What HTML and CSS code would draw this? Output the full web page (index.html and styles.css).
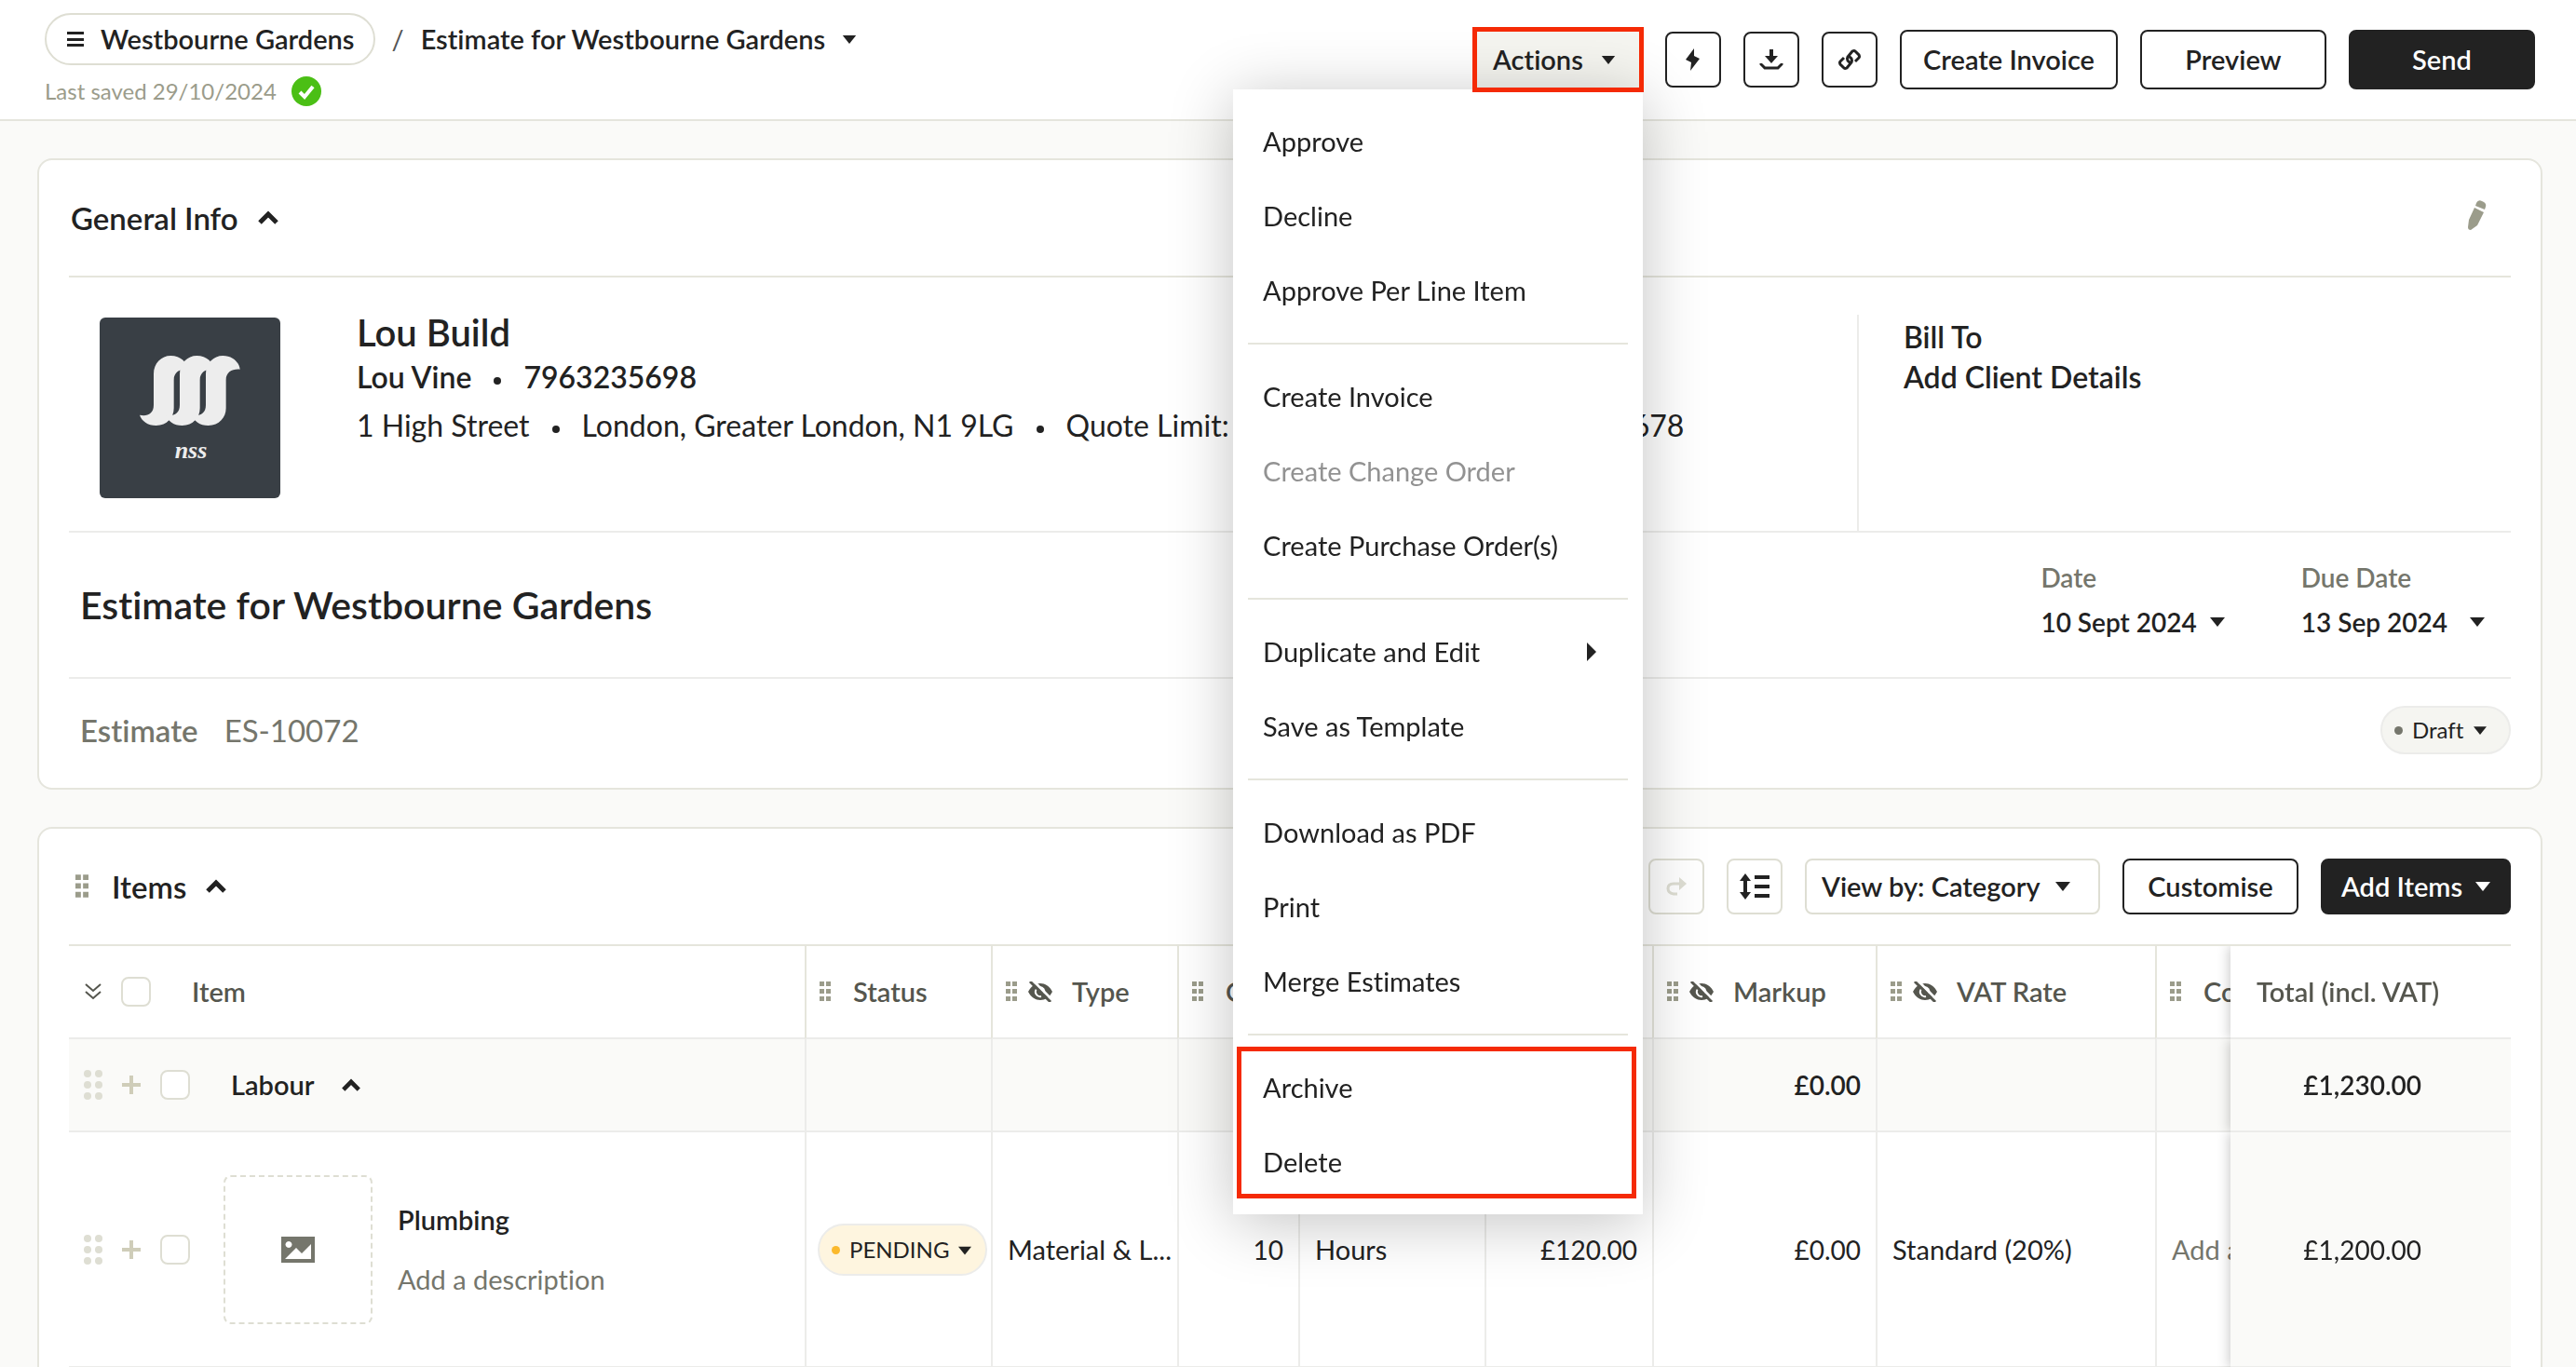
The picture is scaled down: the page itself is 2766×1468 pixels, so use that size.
FILE: index.html
```
<!DOCTYPE html>
<html lang="en">
<head>
    <meta charset="UTF-8">
    <meta name="viewport" content="width=device-width, initial-scale=1.0">
    <title>Estimate for Westbourne Gardens</title>
    <link rel="stylesheet" href="styles.css">
</head>
<body>
    <!-- Shared icons -->
    <svg class="sprite" aria-hidden="true">
        <symbol id="caret" viewBox="0 0 16 10"><path d="M0 0h16L8 10z"/></symbol>
        <symbol id="chevron-up" viewBox="0 0 24 16"><path d="M3 13l9-9 9 9" fill="none" stroke="currentColor" stroke-width="5"/></symbol>
        <symbol id="drag" viewBox="0 0 12 22"><path d="M0 0h5v5H0zM7 0h5v5H7zM0 8h5v5H0zM7 8h5v5H7zM0 16h5v5H0zM7 16h5v5H7z"/></symbol>
        <symbol id="dots" viewBox="0 0 20 32"><circle cx="4" cy="4" r="4"/><circle cx="16" cy="4" r="4"/><circle cx="4" cy="16" r="4"/><circle cx="16" cy="16" r="4"/><circle cx="4" cy="28" r="4"/><circle cx="16" cy="28" r="4"/></symbol>
        <symbol id="plus" viewBox="0 0 20 20"><path d="M8 0h4v8h8v4h-8v8H8v-8H0V8h8z"/></symbol>
        <symbol id="eye-off" viewBox="0 0 26 22">
            <path d="M0 11C3 5 8 2 13 2s10 3 13 9c-3 6-8 9-13 9S3 17 0 11z"/>
            <path d="M9 8a5 5 0 0 0 5 8M12 6a5 5 0 0 1 5 7" fill="none" stroke="#fff" stroke-width="2"/>
            <path d="M5 -1L26 20" stroke="#fff" stroke-width="3"/>
            <path d="M2 0L24 22" stroke="currentColor" stroke-width="3"/>
        </symbol>
    </svg>

    <header class="topbar">
        <div class="topbar-left">
            <nav class="breadcrumb">
                <a class="crumb-pill" href="#">
                    <svg width="18" height="16" viewBox="0 0 18 16"><path d="M0 0h18v3H0zM0 7h18v3H0zM0 13h18v3H0z"/></svg>
                    Westbourne Gardens
                </a>
                <span class="slash">/</span>
                <button class="crumb-title" type="button">Estimate for Westbourne Gardens <svg width="16" height="9"><use href="#caret"/></svg></button>
            </nav>
            <p class="saved">
                Last saved 29/10/2024
                <svg width="32" height="32" viewBox="0 0 32 32"><circle cx="16" cy="16" r="16" fill="#4bbf15"/><path class="outline" d="M9 17l5 5 9-11" stroke="#fff" stroke-width="4"/></svg>
            </p>
        </div>
        <div class="topbar-right">
            <div class="actions">
                <button class="actions-toggle" type="button" aria-expanded="true">Actions <svg width="16" height="9"><use href="#caret"/></svg></button>
                <div class="menu" role="menu">
                    <div class="menu-group">
                        <button class="menu-item" type="button" role="menuitem">Approve</button>
                        <button class="menu-item" type="button" role="menuitem">Decline</button>
                        <button class="menu-item" type="button" role="menuitem">Approve Per Line Item</button>
                    </div>
                    <div class="menu-group">
                        <button class="menu-item" type="button" role="menuitem">Create Invoice</button>
                        <button class="menu-item" type="button" role="menuitem" disabled>Create Change Order</button>
                        <button class="menu-item" type="button" role="menuitem">Create Purchase Order(s)</button>
                    </div>
                    <div class="menu-group">
                        <button class="menu-item" type="button" role="menuitem">Duplicate and Edit <svg width="10" height="20" viewBox="0 0 10 20"><path d="M0 0l10 10L0 20z"/></svg></button>
                        <button class="menu-item" type="button" role="menuitem">Save as Template</button>
                    </div>
                    <div class="menu-group">
                        <button class="menu-item" type="button" role="menuitem">Download as PDF</button>
                        <button class="menu-item" type="button" role="menuitem">Print</button>
                        <button class="menu-item" type="button" role="menuitem">Merge Estimates</button>
                    </div>
                    <div class="menu-group highlighted">
                        <button class="menu-item" type="button" role="menuitem">Archive</button>
                        <button class="menu-item" type="button" role="menuitem">Delete</button>
                    </div>
                </div>
            </div>
            <button class="btn btn-icon" type="button" aria-label="Automations">
                <svg width="16" height="24" viewBox="0 0 16 24"><path d="M9 0L0 12l6 3-1 9 10-13-6-3z"/></svg>
            </button>
            <button class="btn btn-icon" type="button" aria-label="Download">
                <svg width="24" height="24" viewBox="0 0 24 24"><path d="M10 1h4v7h5l-7 8-7-8h5z"/><path class="outline" d="M1 16v1l4 4h14l4-4v-1" stroke="currentColor" stroke-width="3"/></svg>
            </button>
            <button class="btn btn-icon" type="button" aria-label="Copy link">
                <svg class="outline" width="24" height="24" viewBox="0 0 24 24" stroke="currentColor" stroke-width="3"><path d="M13 16l-3-3q-1-2 0-4l5-6q2-1 3 0l4 4q1 2 0 3l-4 4"/><path d="M11 8l3 3q1 2 0 4l-5 6q-2 1-3 0l-4-4q-1-2 0-3l4-4"/></svg>
            </button>
            <button class="btn btn-wide" type="button">Create Invoice</button>
            <button class="btn btn-wide" type="button">Preview</button>
            <button class="btn btn-wide btn-dark" type="button">Send</button>
        </div>
    </header>

    <main class="page">
        <section class="card">
            <div class="card-header info-header">
                <h2>General Info</h2>
                <svg width="24" height="16"><use href="#chevron-up"/></svg>
                <button class="edit" type="button" aria-label="Edit general info">
                    <svg width="22" height="32" viewBox="0 0 22 32"><path d="M11 3q2-4 6-2l2 1q3 2 2 5l-1 3-10-4zM9 8l10 5-7 14-7 5q-3 0-3-3l1-8z"/></svg>
                </button>
            </div>
            <div class="company">
                <svg class="logo" viewBox="0 0 194 194" role="img" aria-label="nss logo">
                    <rect width="194" height="194" rx="6" fill="#393f45"/>
                    <g fill="#ededed">
                        <g transform="translate(23 19) scale(.3333)">
                            <path id="ribbon" d="M60 257C82 262 105 255 105 225V125C105 90 130 66 160 66C192 66 213 88 215 110C190 108 170 118 170 145V235C170 265 148 291 113 291C86 291 66 276 60 257z"/>
                            <use href="#ribbon" x="84"/>
                            <use href="#ribbon" x="168"/>
                        </g>
                        <text class="logo-text" x="98" y="151" text-anchor="middle">nss</text>
                    </g>
                </svg>
                <div class="company-info">
                    <h3>Lou Build</h3>
                    <p class="contact"><span>Lou Vine</span><span>7963235698</span></p>
                    <p class="address"><span>1 High Street</span><span>London, Greater London, N1 9LG</span><span>Quote Limit: £5,000.00</span><span>VAT No.: 12345678</span></p>
                </div>
                <div class="bill-to">
                    <p>Bill To</p>
                    <p><a href="#">Add Client Details</a></p>
                </div>
            </div>
            <div class="title-row">
                <h1>Estimate for Westbourne Gardens</h1>
                <div class="date">
                    <span id="date-label">Date</span>
                    <button type="button" aria-labelledby="date-label">10 Sept 2024 <svg width="16" height="10"><use href="#caret"/></svg></button>
                </div>
                <div class="date">
                    <span id="due-label">Due Date</span>
                    <button class="due" type="button" aria-labelledby="due-label">13 Sep 2024 <svg width="16" height="10"><use href="#caret"/></svg></button>
                </div>
            </div>
            <div class="number-row">
                <strong>Estimate</strong>
                <span>ES-10072</span>
                <div class="pill pill-draft">
                    <select aria-label="Estimate status"><option>Draft</option></select>
                    <svg width="14" height="9"><use href="#caret"/></svg>
                </div>
            </div>
        </section>

        <section class="card">
            <div class="card-header items-header">
                <svg class="drag" width="14" height="26"><use href="#drag"/></svg>
                <h2>Items</h2>
                <svg width="24" height="16"><use href="#chevron-up"/></svg>
                <div class="toolbar">
                    <button class="btn btn-icon btn-light" type="button" aria-label="Undo" disabled>
                        <svg width="22" height="20" viewBox="0 0 22 20"><path d="M0 7l8-7v14z"/><path class="outline" d="M7 7h7q6 0 6 5t-6 6h-4" stroke="currentColor" stroke-width="3"/></svg>
                    </button>
                    <button class="btn btn-icon btn-light" type="button" aria-label="Redo" disabled>
                        <svg width="22" height="20" viewBox="0 0 22 20"><path d="M22 7l-8-7v14z"/><path class="outline" d="M15 7H8q-6 0-6 5t6 6h4" stroke="currentColor" stroke-width="3"/></svg>
                    </button>
                    <button class="btn btn-icon btn-light" type="button" aria-label="Row height">
                        <svg width="32" height="28" viewBox="0 0 32 28"><path d="M6 0l6 8H8v12h4l-6 8-6-8h4V8H0zM16 2h16v4H16zM16 12h16v4H16zM16 22h16v4H16z"/></svg>
                    </button>
                    <div class="view-by">
                        <select aria-label="View by"><option>View by: Category</option></select>
                        <svg width="16" height="10"><use href="#caret"/></svg>
                    </div>
                    <button class="btn btn-customise" type="button">Customise</button>
                    <button class="btn btn-dark btn-add" type="button">Add Items <svg width="16" height="10"><use href="#caret"/></svg></button>
                </div>
            </div>
            <div class="table-wrap">
                <table>
                    <colgroup>
                        <col class="col-item"><col class="col-status"><col class="col-type"><col class="col-qty"><col class="col-unit">
                        <col class="col-cost"><col class="col-markup"><col class="col-vat"><col class="col-comment"><col class="col-total">
                    </colgroup>
                    <thead>
                        <tr>
                            <th>
                                <div class="cell cell-item">
                                    <svg class="outline" width="18" height="18" viewBox="0 0 18 18" stroke="currentColor" stroke-width="2"><path d="M1 1l8 7 8-7M1 9l8 7 8-7"/></svg>
                                    <input type="checkbox" aria-label="Select all items">
                                    <span class="name">Item</span>
                                </div>
                            </th>
                            <th><div class="cell"><svg class="drag" width="12" height="22"><use href="#drag"/></svg><span class="label">Status</span></div></th>
                            <th><div class="cell"><svg class="drag" width="12" height="22"><use href="#drag"/></svg><svg class="eye" width="26" height="22"><use href="#eye-off"/></svg><span class="label">Type</span></div></th>
                            <th><div class="cell"><svg class="drag" width="12" height="22"><use href="#drag"/></svg><span class="label">Qty</span></div></th>
                            <th><div class="cell"><svg class="drag" width="12" height="22"><use href="#drag"/></svg><span class="label">Unit</span></div></th>
                            <th><div class="cell"><svg class="drag" width="12" height="22"><use href="#drag"/></svg><span class="label">Cost</span></div></th>
                            <th><div class="cell"><svg class="drag" width="12" height="22"><use href="#drag"/></svg><svg class="eye" width="26" height="22"><use href="#eye-off"/></svg><span class="label">Markup</span></div></th>
                            <th><div class="cell"><svg class="drag" width="12" height="22"><use href="#drag"/></svg><svg class="eye" width="26" height="22"><use href="#eye-off"/></svg><span class="label">VAT Rate</span></div></th>
                            <th><div class="cell"><svg class="drag" width="12" height="22"><use href="#drag"/></svg><span class="label">Comments</span></div></th>
                            <th class="total">Total (incl. VAT)</th>
                        </tr>
                    </thead>
                    <tbody>
                        <tr class="group">
                            <td>
                                <div class="cell cell-item">
                                    <svg class="faint" width="20" height="32"><use href="#dots"/></svg>
                                    <svg class="faint-plus" width="20" height="20"><use href="#plus"/></svg>
                                    <input type="checkbox" aria-label="Select Labour">
                                    <span class="name">Labour</span>
                                    <svg class="group-chevron" width="22" height="15"><use href="#chevron-up"/></svg>
                                </div>
                            </td>
                            <td></td>
                            <td></td>
                            <td></td>
                            <td></td>
                            <td></td>
                            <td class="num">£0.00</td>
                            <td></td>
                            <td></td>
                            <td class="num total">£1,230.00</td>
                        </tr>
                        <tr class="line">
                            <td>
                                <div class="cell cell-item">
                                    <svg class="faint" width="20" height="32"><use href="#dots"/></svg>
                                    <svg class="faint-plus" width="20" height="20"><use href="#plus"/></svg>
                                    <input type="checkbox" aria-label="Select Plumbing">
                                    <button class="image-drop" type="button" aria-label="Add image">
                                        <svg width="36" height="28" viewBox="0 0 36 28"><path fill-rule="evenodd" d="M0 0h36v28H0zM4 24h28V8l-10 10-6-6zM8 5a3.500 3.500 0 1 0 .01 0z"/></svg>
                                    </button>
                                    <div class="line-text">
                                        <strong>Plumbing</strong>
                                        <span>Add a description</span>
                                    </div>
                                </div>
                            </td>
                            <td class="status-cell">
                                <div class="pill pill-pending">
                                    <select aria-label="Item status"><option>PENDING</option></select>
                                    <svg width="14" height="10"><use href="#caret"/></svg>
                                </div>
                            </td>
                            <td>Material &amp; L...</td>
                            <td class="num">10</td>
                            <td>Hours</td>
                            <td class="num">£120.00</td>
                            <td class="num">£0.00</td>
                            <td>Standard (20%)</td>
                            <td class="placeholder">Add a comment</td>
                            <td class="num total">£1,200.00</td>
                        </tr>
                    </tbody>
                </table>
            </div>
        </section>
    </main>
</body>
</html>
```
FILE: styles.css
```
* {
    box-sizing: border-box;
}
body {
    margin: 0;
    height: 100vh;
    display: flex;
    flex-direction: column;
    overflow: hidden;
    background-color: #fafaf8;
    color: #222;
    font-family: Lato, "Noto Sans", sans-serif;
    font-size: 29px;
    line-height: 36px;
    font-variant-ligatures: none;
}
h1, h2, h3, p {
    margin: 0;
    font-weight: 600;
}
button, select, input {
    margin: 0;
    font: inherit;
    font-variant-ligatures: none;
    color: inherit;
}
button {
    padding: 0;
    border: none;
    background: none;
    text-align: left;
}
select {
    appearance: none;
    border: none;
    background: none;
}
a {
    color: inherit;
    text-decoration: none;
}
svg {
    flex: none;
    fill: currentColor;
    overflow: visible;
}
.outline {
    fill: none;
}
.sprite {
    position: absolute;
    width: 0;
    height: 0;
    overflow: hidden;
}

/* Top bar */
.topbar {
    position: relative;
    z-index: 2;
    display: flex;
    justify-content: space-between;
    flex: none;
    height: 130px;
    padding: 0 44px 0 48px;
    background-color: #fff;
    border-bottom: 2px solid #e5e5dd;
}
.topbar-left {
    padding-top: 14px;
}
.breadcrumb {
    display: flex;
    align-items: center;
}
.crumb-pill {
    display: flex;
    align-items: center;
    gap: 18px;
    height: 56px;
    padding: 0 20px 0 22px;
    border: 2px solid #deded3;
    border-radius: 28px;
    font-weight: 600;
}
.slash {
    margin: 0 18px;
    color: #555;
}
.crumb-title {
    display: flex;
    align-items: center;
    gap: 18px;
    font-weight: 600;
}
.saved {
    display: flex;
    align-items: center;
    gap: 16px;
    margin-top: 10px;
    font-size: 24px;
    font-weight: 400;
    color: #9b9c8b;
}
.topbar-right {
    display: flex;
    align-items: center;
    gap: 24px;
}
.btn {
    display: flex;
    align-items: center;
    justify-content: center;
    gap: 14px;
    height: 60px;
    border: 2px solid #222;
    border-radius: 8px;
    background-color: #fff;
    font-weight: 600;
}
.btn-icon {
    width: 60px;
}
.btn-wide {
    height: 64px;
    min-width: 200px;
    padding: 0 23px;
}
.btn-dark {
    background-color: #222;
    color: #fff;
}
.btn-light {
    border-color: #deded3;
}
.btn-light:disabled {
    color: #deded3;
}

/* Actions menu */
.actions {
    position: relative;
}
.actions-toggle {
    display: flex;
    align-items: center;
    justify-content: space-between;
    width: 180px;
    height: 64px;
    padding: 0 29px 0 19px;
    background-color: #f5f5f0;
    font-weight: 600;
}
.actions::after {
    content: "";
    position: absolute;
    z-index: 2;
    inset: -3px -1px -3px -3px;
    border: 5px solid #f52a05;
    pointer-events: none;
}
.menu {
    position: absolute;
    top: 100%;
    right: 0;
    width: 440px;
    padding: 16px 0;
    background-color: #fff;
    box-shadow: 0 8px 64px rgba(0, 0, 0, 0.24);
}
.menu-group {
    position: relative;
}
.menu-group + .menu-group::before {
    content: "";
    display: block;
    height: 2px;
    margin: 16px;
    background-color: #e5e5dc;
}
.menu-item {
    display: flex;
    align-items: center;
    justify-content: space-between;
    width: 100%;
    height: 80px;
    padding: 0 50px 0 32px;
}
.menu-item:disabled {
    color: #929292;
}
.highlighted::after {
    content: "";
    position: absolute;
    inset: 14px 7px 1px 4px;
    border: 5px solid #f52a05;
    pointer-events: none;
}

/* Cards */
.page {
    flex: 1;
    min-height: 0;
    overflow-y: auto;
    scrollbar-width: none;
    padding: 40px 36px 40px 40px;
}
.card {
    margin-bottom: 40px;
    padding: 0 32px;
    border: 2px solid #e5e5dd;
    border-radius: 16px;
    background-color: #fff;
}
.card-header {
    display: flex;
    align-items: center;
    height: 126px;
    border-bottom: 2px solid #e5e5dc;
}
.card-header h2 {
    margin-right: 20px;
    font-size: 33px;
}
.info-header h2 {
    padding-left: 2px;
}
.edit {
    margin-left: auto;
    margin-right: 26px;
    color: #9b9c8b;
}
.company {
    display: flex;
    align-items: flex-start;
    height: 274px;
    padding-left: 33px;
    border-bottom: 2px solid #ececea;
}
.logo {
    width: 194px;
    height: 194px;
    margin-top: 43px;
}
.logo-text {
    font: italic bold 26px "Liberation Serif", serif;
}
.company-info {
    flex: 1;
    padding: 36px 0 0 82px;
    font-size: 32px;
    line-height: 50px;
    white-space: nowrap;
}
.company-info h3 {
    font-size: 40px;
    line-height: 46px;
}
.company-info .address {
    margin-top: 2px;
    font-weight: 400;
}
.company-info span + span::before {
    content: "";
    display: inline-block;
    width: 8px;
    height: 8px;
    margin: 0 24px;
    border-radius: 50%;
    background-color: #222;
    vertical-align: middle;
}
.bill-to {
    flex: 0 0 702px;
    align-self: stretch;
    margin-top: 40px;
    padding: 2px 0 0 48px;
    border-left: 2px solid #ececea;
    font-size: 32px;
    line-height: 43px;
}
.title-row {
    display: flex;
    align-items: center;
    height: 157px;
    padding: 0 12px;
    border-bottom: 2px solid #ececea;
}
.title-row h1 {
    margin-right: auto;
    font-size: 41px;
}
.date {
    margin: 0 16px 12px 0;
    padding-left: 66px;
    font-size: 28px;
    font-weight: 600;
}
.date span {
    color: #75766c;
}
.date button {
    display: flex;
    align-items: center;
    gap: 14px;
    margin-top: 12px;
}
.date .due {
    gap: 24px;
}
.number-row {
    display: flex;
    align-items: center;
    gap: 28px;
    height: 117px;
    padding: 0 0 8px 12px;
    font-size: 33px;
    color: #75766c;
}
.number-row strong {
    font-weight: 600;
}

/* Status pills */
.pill {
    position: relative;
    border: 2px solid #ececea;
    border-radius: 28px;
    color: #222;
    font-size: 24px;
}
.pill::before {
    content: "";
    position: absolute;
    top: 50%;
    left: 13px;
    width: 9px;
    height: 9px;
    margin-top: -4px;
    border-radius: 50%;
    background-color: #75766c;
}
.pill select {
    display: block;
    width: 100%;
    height: 48px;
    padding: 0 0 0 32px;
}
.pill svg {
    position: absolute;
    top: 50%;
    right: 24px;
    margin-top: -4px;
    pointer-events: none;
}
.pill-draft {
    width: 140px;
    margin-left: auto;
    background-color: #f5f5f1;
}
.pill-pending {
    width: 182px;
    background-color: #fef5df;
}
.pill-pending::before {
    background-color: #fbb92c;
}
.pill-pending select {
    height: 52px;
}
.pill-pending svg {
    right: 15px;
}

/* Items toolbar */
.items-header {
    padding-left: 7px;
}
.items-header .drag {
    margin-right: 25px;
}
.drag {
    color: #9b9c8b;
}
.toolbar {
    display: flex;
    gap: 24px;
    margin-left: auto;
}
.view-by {
    position: relative;
}
.view-by select {
    width: 317px;
    height: 60px;
    padding: 0 0 0 16px;
    border: 2px solid #deded3;
    border-radius: 8px;
    font-weight: 600;
}
.view-by svg {
    position: absolute;
    top: 25px;
    right: 32px;
    pointer-events: none;
}
.btn-customise {
    width: 189px;
}
.btn-add {
    width: 204px;
}

/* Items table */
.table-wrap {
    margin-bottom: 32px;
    overflow-x: auto;
    scrollbar-width: none;
}
table {
    width: 2841px;
    min-width: 100%;
    table-layout: fixed;
    border-collapse: separate;
    border-spacing: 0;
}
.col-item { width: 790px; }
.col-status, .col-type, .col-unit { width: 200px; }
.col-qty { width: 130px; }
.col-cost { width: 180px; }
.col-markup { width: 240px; }
.col-vat, .col-comment { width: 300px; }
.col-total { width: 301px; }
th, td {
    padding: 0 16px;
    border-left: 2px solid #ececea;
    border-bottom: 2px solid #ececea;
    background-color: #fff;
    text-align: left;
    white-space: nowrap;
}
th {
    height: 100px;
    padding: 0 14px;
    border-left-color: #e5e5dc;
    color: #55564e;
    font-weight: 600;
}
th:first-child, td:first-child {
    border-left: none;
}
.cell {
    display: flex;
    align-items: center;
}
.cell-item {
    gap: 21px;
    padding-left: 3px;
}
td .cell-item {
    padding-left: 0;
}
.label {
    margin-left: 24px;
}
.eye {
    margin: 0 -3px 0 12px;
}
.name {
    margin-left: 23px;
}
input[type="checkbox"] {
    appearance: none;
    flex: none;
    width: 32px;
    height: 32px;
    border: 2px solid #deded3;
    border-radius: 8px;
    background-color: #fff;
}
.group td {
    height: 100px;
    background-color: #fafaf8;
    font-weight: 600;
}
.group-chevron {
    margin-left: 8px;
}
.line td {
    height: 253px;
}
.faint {
    color: #deded3;
}
.faint-plus {
    color: #cfcdb9;
}
.image-drop {
    display: flex;
    align-items: center;
    justify-content: center;
    width: 160px;
    height: 160px;
    margin-left: 15px;
    border: 2px dashed #deded3;
    border-radius: 8px;
    color: #75766c;
}
.line-text {
    display: grid;
    gap: 28px;
    margin-left: 6px;
}
.line-text strong {
    font-weight: 600;
}
.line-text span, td.placeholder {
    color: #75766c;
}
.status-cell {
    padding: 0 0 0 12px;
}
td.num {
    font-size: 28px;
    text-align: right;
}
th.total, td.total {
    position: sticky;
    right: 0;
    border-left: none;
    box-shadow: -2px 0 12px rgba(0, 0, 0, 0.2);
    clip-path: inset(0 0 0 -16px);
}
th.total {
    padding-left: 28px;
}
td.total {
    padding-right: 96px;
    background-color: #fafaf8;
}
```
